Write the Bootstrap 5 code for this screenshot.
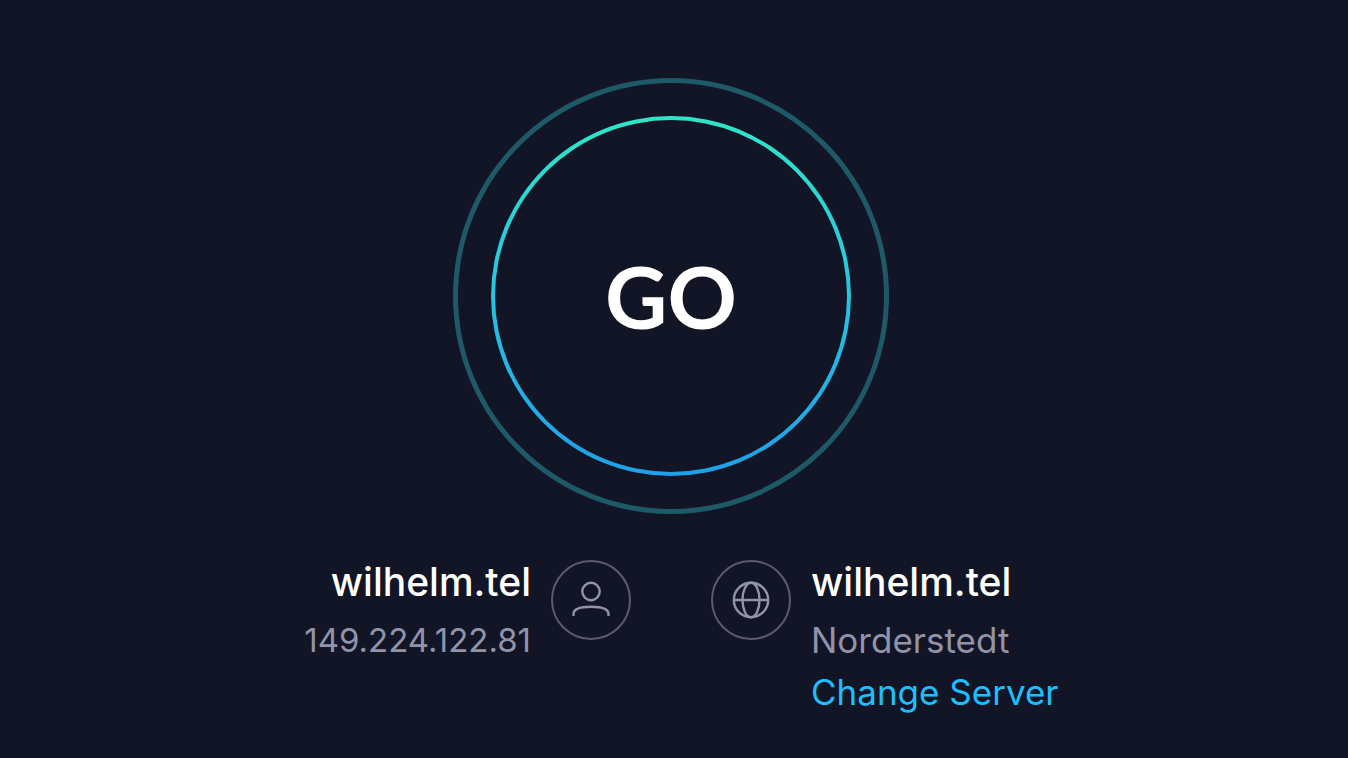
<!DOCTYPE html>
<html lang="en">
<head>
<meta charset="utf-8">
<meta name="viewport" content="width=device-width, initial-scale=1">
<title>Speed test</title>
<link href="https://cdn.jsdelivr.net/npm/bootstrap@5.3.0/dist/css/bootstrap.min.css" rel="stylesheet">
<style>
  body { background: #121526; color: #fff; font-family: Inter, "Liberation Sans", sans-serif; }
  .speed-main { padding: 78px 6px 40px 0; }
  .go-ring { width: 436px; height: 436px; border: 5px solid #1e5967; }
  .go-btn {
    width: 360px; height: 360px; border: 4px solid transparent; color: #fff;
    font-family: Lato, Inter, sans-serif; font-size: 86px; font-weight: 700; line-height: 1;
    background: linear-gradient(#121526, #121526) padding-box,
                linear-gradient(#2fe6c8, #26c4e0 50%, #1f9fe8) border-box;
  }
  .hosts { margin-top: 46px; }
  .host-col { padding: 0 40px; gap: 20px; }
  .host-name { font-size: 39px; line-height: 44px; font-weight: 500; margin-bottom: 10px; }
  .host-line { font-size: 35px; line-height: 52px; color: #9193a8; }
  .host-ip { font-size: 33px; }
  .host-line a { color: #1cbfff; }
  .host-icon { width: 80px; height: 80px; border: 2px solid #5b5b70; color: #9193a8; }
</style>
</head>
<body>
<main class="speed-main">
  <div class="go-ring rounded-circle mx-auto d-flex align-items-center justify-content-center">
    <button type="button" class="go-btn rounded-circle p-0">GO</button>
  </div>
  <div class="hosts row g-0">
    <section class="host-col col-6 d-flex justify-content-end align-items-start text-end">
      <div>
        <h2 class="host-name">wilhelm.tel</h2>
        <div class="host-line host-ip">149.224.122.81</div>
      </div>
      <div class="host-icon rounded-circle flex-shrink-0 d-flex align-items-center justify-content-center">
        <svg width="40" height="40" viewBox="0 0 40 40" fill="none" stroke="currentColor" stroke-width="2.4" aria-hidden="true">
          <circle cx="20" cy="11.500" r="8.700"/>
          <path d="M2.500 36v-2c0-4 5-7.300 17.500-7.300S37.500 30 37.500 34v2"/>
        </svg>
      </div>
    </section>
    <section class="host-col col-6 d-flex align-items-start">
      <div class="host-icon rounded-circle flex-shrink-0 d-flex align-items-center justify-content-center">
        <svg width="40" height="40" viewBox="0 0 40 40" fill="none" stroke="currentColor" stroke-width="2.4" aria-hidden="true">
          <circle cx="20" cy="20" r="17.200"/>
          <ellipse cx="20" cy="20" rx="8.500" ry="17.200"/>
          <path d="M2.800 20h34.400"/>
        </svg>
      </div>
      <div>
        <h2 class="host-name">wilhelm.tel</h2>
        <div class="host-line">Norderstedt</div>
        <div class="host-line"><a href="#" class="text-decoration-none">Change Server</a></div>
      </div>
    </section>
  </div>
</main>
<script src="https://cdn.jsdelivr.net/npm/bootstrap@5.3.0/dist/js/bootstrap.bundle.min.js"></script>
</body>
</html>
